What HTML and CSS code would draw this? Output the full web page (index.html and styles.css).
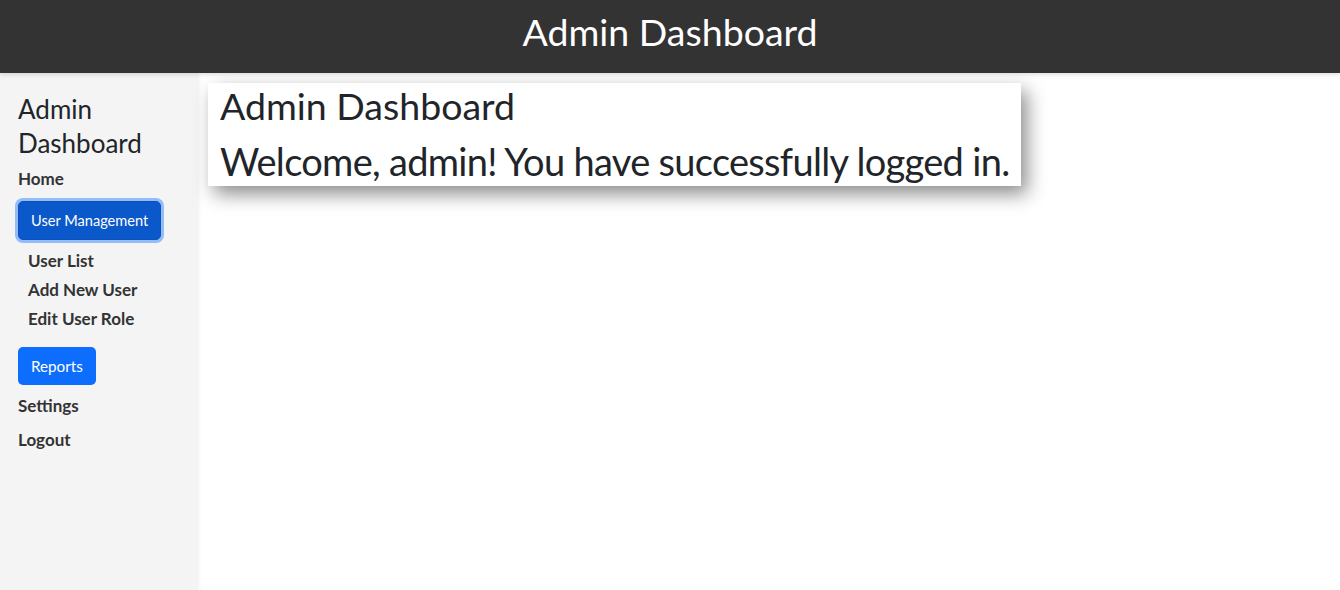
FILE: index.html
```html
<!DOCTYPE html>
<html lang="en">
<head>
<meta charset="utf-8">
<title>Admin Dashboard</title>
<link rel="stylesheet" href="styles.css">
</head>
<body>
<header class="topbar">
  <h1 class="topbar-title">Admin Dashboard</h1>
</header>
<div class="layout">
  <nav class="sidebar">
    <h3 class="sidebar-title">Admin Dashboard</h3>
    <a class="nav-link" href="#">Home</a>
    <button class="btn btn-active">User Management</button>
    <ul class="sub-list">
      <li><a class="sub-link" href="#">User List</a></li>
      <li><a class="sub-link" href="#">Add New User</a></li>
      <li><a class="sub-link" href="#">Edit User Role</a></li>
    </ul>
    <button class="btn btn-reports">Reports</button>
    <a class="nav-link nav-settings" href="#">Settings</a>
    <a class="nav-link nav-logout" href="#">Logout</a>
  </nav>
  <main class="content">
    <section class="card">
      <h1 class="card-title">Admin Dashboard</h1>
      <p class="card-text">Welcome, admin! You have successfully logged in.</p>
    </section>
  </main>
</div>
</body>
</html>
```
FILE: styles.css
```css
html, body {
  margin: 0;
  padding: 0;
  height: 100%;
}
body {
  font-family: "Lato", "Open Sans", sans-serif;
  color: #212529;
  background: #fff;
  display: flex;
  flex-direction: column;
}
.topbar {
  background: #333;
  height: 73px;
  display: flex;
  align-items: center;
  justify-content: center;
  box-shadow: 0 2px 4px rgba(0,0,0,0.12);
  position: relative;
  z-index: 2;
}
.topbar-title {
  margin: 0;
  color: #fff;
  font-weight: 400;
  font-size: 37.5px;
  line-height: 46px;
  margin-top: -9px;
}
.layout {
  flex: 1;
  display: flex;
}
.sidebar {
  width: 198px;
  flex: none;
  background: #f4f4f4;
  padding: 19px 0 0 18px;
  box-sizing: border-box;
  display: flex;
  flex-direction: column;
  align-items: flex-start;
  box-shadow: 1px 0 4px rgba(0,0,0,0.06);
}
.sidebar-title {
  margin: 0;
  font-size: 26px;
  font-weight: 400;
  line-height: 34px;
  color: #212529;
  width: 150px;
}
.nav-link {
  display: block;
  color: #333;
  font-weight: 700;
  font-size: 17px;
  line-height: 20px;
  text-decoration: none;
  margin-top: 9px;
}
.btn {
  font-family: inherit;
  font-size: 14.6px;
  color: #fff;
  border: 1px solid transparent;
  border-radius: 5px;
  padding: 0 12px;
  line-height: 36px;
  height: 38px;
  background: #0d6efd;
  cursor: pointer;
}
.btn-active {
  margin-top: 12px;
  height: 39px;
  background: #0a58ca;
  border-color: #0a53be;
  box-shadow: 0 0 0 3px rgba(49,132,253,0.5);
}
.btn-reports {
  margin-top: 18px;
  font-size: 15.2px;
}
.sub-list {
  list-style: none;
  margin: 11px 0 0 10px;
  padding: 0;
  display: flex;
  flex-direction: column;
  gap: 9px;
}
.sub-link {
  display: block;
  color: #333;
  font-weight: 700;
  font-size: 17px;
  line-height: 20px;
  text-decoration: none;
}
.nav-settings {
  margin-top: 11px;
}
.nav-logout {
  margin-top: 14px;
}
.content {
  flex: 1;
  padding: 10px;
}
.card {
  display: inline-block;
  background: #fff;
  padding: 0 12px;
  box-shadow: 6px 8px 18px rgba(0,0,0,0.45);
}
.card-title {
  margin: 0;
  font-size: 37.5px;
  font-weight: 400;
  line-height: 46px;
}
.card-text {
  margin: 8px 0 0;
  font-size: 38px;
  letter-spacing: -0.7px;
  line-height: 49px;
}
```
